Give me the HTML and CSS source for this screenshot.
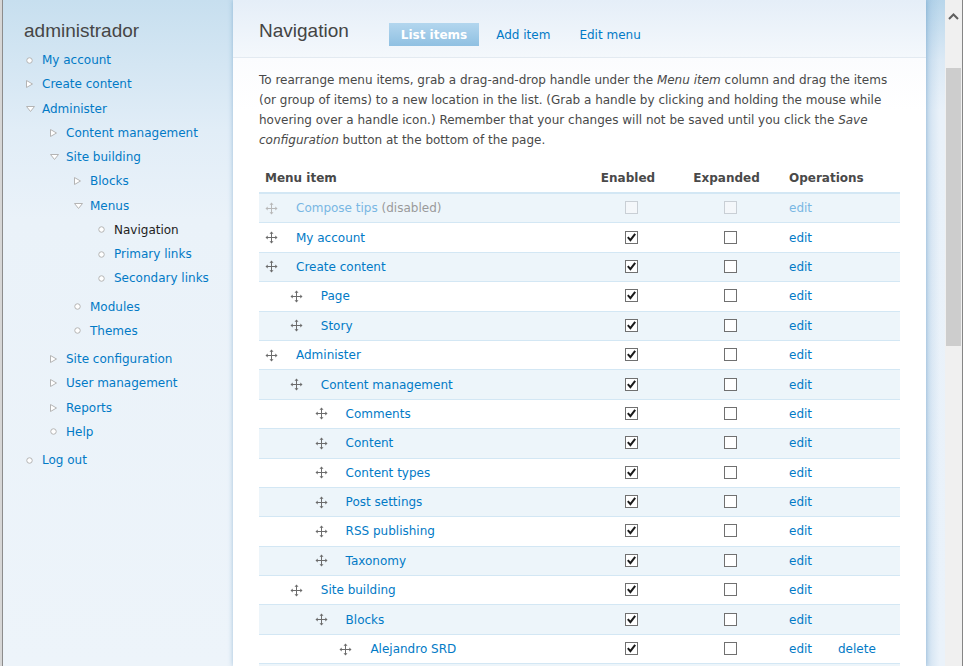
FILE: index.html
```html
<!DOCTYPE html>
<html>
<head>
<meta charset="utf-8">
<title>Navigation</title>
<link rel="stylesheet" href="styles.css">
</head>
<body>
<div class="edge"></div>
<aside class="sidebar">
  <h2 class="sb-title">administrador</h2>
  <ul class="menu">
    <li><div class="row"><span class="mk"><svg width="7" height="7" viewBox="0 0 7 7"><circle cx="3.5" cy="3.5" r="2.75" fill="#fff" stroke="#b4b4b4"/></svg></span><a href="#">My account</a></div></li>
    <li><div class="row"><span class="mk"><svg width="7" height="8" viewBox="0 0 7 8"><polygon points="0.5,0.5 6.5,4 0.5,7.5" fill="#fff" stroke="#b4b4b4"/></svg></span><a href="#">Create content</a></div></li>
    <li><div class="row"><span class="mk"><svg width="9" height="6" viewBox="0 0 9 6"><polygon points="0.5,0.5 8.5,0.5 4.5,5.5" fill="#fff" stroke="#b4b4b4"/></svg></span><a href="#">Administer</a></div>
      <ul>
        <li><div class="row"><span class="mk"><svg width="7" height="8" viewBox="0 0 7 8"><polygon points="0.5,0.5 6.5,4 0.5,7.5" fill="#fff" stroke="#b4b4b4"/></svg></span><a href="#">Content management</a></div></li>
        <li><div class="row"><span class="mk"><svg width="9" height="6" viewBox="0 0 9 6"><polygon points="0.5,0.5 8.5,0.5 4.5,5.5" fill="#fff" stroke="#b4b4b4"/></svg></span><a href="#">Site building</a></div>
          <ul>
            <li><div class="row"><span class="mk"><svg width="7" height="8" viewBox="0 0 7 8"><polygon points="0.5,0.5 6.5,4 0.5,7.5" fill="#fff" stroke="#b4b4b4"/></svg></span><a href="#">Blocks</a></div></li>
            <li><div class="row"><span class="mk"><svg width="9" height="6" viewBox="0 0 9 6"><polygon points="0.5,0.5 8.5,0.5 4.5,5.5" fill="#fff" stroke="#b4b4b4"/></svg></span><a href="#">Menus</a></div>
              <ul>
                <li><div class="row"><span class="mk"><svg width="7" height="7" viewBox="0 0 7 7"><circle cx="3.5" cy="3.5" r="2.75" fill="#fff" stroke="#b4b4b4"/></svg></span><a href="#" class="active">Navigation</a></div></li>
                <li><div class="row"><span class="mk"><svg width="7" height="7" viewBox="0 0 7 7"><circle cx="3.5" cy="3.5" r="2.75" fill="#fff" stroke="#b4b4b4"/></svg></span><a href="#">Primary links</a></div></li>
                <li><div class="row"><span class="mk"><svg width="7" height="7" viewBox="0 0 7 7"><circle cx="3.5" cy="3.5" r="2.75" fill="#fff" stroke="#b4b4b4"/></svg></span><a href="#">Secondary links</a></div></li>
              </ul>
            </li>
            <li><div class="row"><span class="mk"><svg width="7" height="7" viewBox="0 0 7 7"><circle cx="3.5" cy="3.5" r="2.75" fill="#fff" stroke="#b4b4b4"/></svg></span><a href="#">Modules</a></div></li>
            <li><div class="row"><span class="mk"><svg width="7" height="7" viewBox="0 0 7 7"><circle cx="3.5" cy="3.5" r="2.75" fill="#fff" stroke="#b4b4b4"/></svg></span><a href="#">Themes</a></div></li>
          </ul>
        </li>
        <li><div class="row"><span class="mk"><svg width="7" height="8" viewBox="0 0 7 8"><polygon points="0.5,0.5 6.5,4 0.5,7.5" fill="#fff" stroke="#b4b4b4"/></svg></span><a href="#">Site configuration</a></div></li>
        <li><div class="row"><span class="mk"><svg width="7" height="8" viewBox="0 0 7 8"><polygon points="0.5,0.5 6.5,4 0.5,7.5" fill="#fff" stroke="#b4b4b4"/></svg></span><a href="#">User management</a></div></li>
        <li><div class="row"><span class="mk"><svg width="7" height="8" viewBox="0 0 7 8"><polygon points="0.5,0.5 6.5,4 0.5,7.5" fill="#fff" stroke="#b4b4b4"/></svg></span><a href="#">Reports</a></div></li>
        <li><div class="row"><span class="mk"><svg width="7" height="7" viewBox="0 0 7 7"><circle cx="3.5" cy="3.5" r="2.75" fill="#fff" stroke="#b4b4b4"/></svg></span><a href="#">Help</a></div></li>
      </ul>
    </li>
    <li><div class="row"><span class="mk"><svg width="7" height="7" viewBox="0 0 7 7"><circle cx="3.5" cy="3.5" r="2.75" fill="#fff" stroke="#b4b4b4"/></svg></span><a href="#">Log out</a></div></li>
  </ul>
</aside>

<main class="panel">
  <header class="panel-head">
    <h1>Navigation</h1>
    <ul class="tabs">
      <li class="active"><a href="#">List items</a></li>
      <li><a href="#">Add item</a></li>
      <li><a href="#">Edit menu</a></li>
    </ul>
  </header>
  <div class="panel-body">
    <p>To rearrange menu items, grab a drag-and-drop handle under the <em>Menu item</em> column and drag the items (or group of items) to a new location in the list. (Grab a handle by clicking and holding the mouse while hovering over a handle icon.) Remember that your changes will not be saved until you click the <em>Save configuration</em> button at the bottom of the page.</p>
    <table class="items">
      <colgroup><col class="c1"><col class="c2"><col class="c3"><col class="c4"><col class="c5"></colgroup>
      <thead>
        <tr><th>Menu item</th><th class="ctr en">Enabled</th><th class="ctr ex">Expanded</th><th colspan="2">Operations</th></tr>
      </thead>
      <tbody>
        <tr class="odd disabled">
          <td><div class="mi"><svg class="handle" width="13" height="13" viewBox="0 0 13 13"><path d="M6.5 2v9M2 6.5h9" stroke="currentColor"/><path d="M6.5 0.5l-2 2.2h4zM6.5 12.5l-2-2.2h4zM0.5 6.5l2.2-2v4zM12.5 6.5l-2.2-2v4z" fill="currentColor"/></svg><a href="#">Compose tips</a>&nbsp;<span class="dis">(disabled)</span></div></td>
          <td class="ctr en"><span class="cb off"></span></td>
          <td class="ctr ex"><span class="cb off"></span></td>
          <td><a href="#">edit</a></td><td></td>
        </tr>
        <tr class="even">
          <td><div class="mi"><svg class="handle" width="13" height="13" viewBox="0 0 13 13"><path d="M6.5 2v9M2 6.5h9" stroke="currentColor"/><path d="M6.5 0.5l-2 2.2h4zM6.5 12.5l-2-2.2h4zM0.5 6.5l2.2-2v4zM12.5 6.5l-2.2-2v4z" fill="currentColor"/></svg><a href="#">My account</a></div></td>
          <td class="ctr en"><span class="cb"><svg width="11" height="11" viewBox="0 0 11 11"><path d="M1.8 5.2l2.6 3 4.8-6.4" stroke="#1a1a1a" stroke-width="2" fill="none"/></svg></span></td>
          <td class="ctr ex"><span class="cb"></span></td>
          <td><a href="#">edit</a></td><td></td>
        </tr>
        <tr class="odd">
          <td><div class="mi"><svg class="handle" width="13" height="13" viewBox="0 0 13 13"><path d="M6.5 2v9M2 6.5h9" stroke="currentColor"/><path d="M6.5 0.5l-2 2.2h4zM6.5 12.5l-2-2.2h4zM0.5 6.5l2.2-2v4zM12.5 6.5l-2.2-2v4z" fill="currentColor"/></svg><a href="#">Create content</a></div></td>
          <td class="ctr en"><span class="cb"><svg width="11" height="11" viewBox="0 0 11 11"><path d="M1.8 5.2l2.6 3 4.8-6.4" stroke="#1a1a1a" stroke-width="2" fill="none"/></svg></span></td>
          <td class="ctr ex"><span class="cb"></span></td>
          <td><a href="#">edit</a></td><td></td>
        </tr>
        <tr class="even">
          <td><div class="mi l1"><svg class="handle" width="13" height="13" viewBox="0 0 13 13"><path d="M6.5 2v9M2 6.5h9" stroke="currentColor"/><path d="M6.5 0.5l-2 2.2h4zM6.5 12.5l-2-2.2h4zM0.5 6.5l2.2-2v4zM12.5 6.5l-2.2-2v4z" fill="currentColor"/></svg><a href="#">Page</a></div></td>
          <td class="ctr en"><span class="cb"><svg width="11" height="11" viewBox="0 0 11 11"><path d="M1.8 5.2l2.6 3 4.8-6.4" stroke="#1a1a1a" stroke-width="2" fill="none"/></svg></span></td>
          <td class="ctr ex"><span class="cb"></span></td>
          <td><a href="#">edit</a></td><td></td>
        </tr>
        <tr class="odd">
          <td><div class="mi l1"><svg class="handle" width="13" height="13" viewBox="0 0 13 13"><path d="M6.5 2v9M2 6.5h9" stroke="currentColor"/><path d="M6.5 0.5l-2 2.2h4zM6.5 12.5l-2-2.2h4zM0.5 6.5l2.2-2v4zM12.5 6.5l-2.2-2v4z" fill="currentColor"/></svg><a href="#">Story</a></div></td>
          <td class="ctr en"><span class="cb"><svg width="11" height="11" viewBox="0 0 11 11"><path d="M1.8 5.2l2.6 3 4.8-6.4" stroke="#1a1a1a" stroke-width="2" fill="none"/></svg></span></td>
          <td class="ctr ex"><span class="cb"></span></td>
          <td><a href="#">edit</a></td><td></td>
        </tr>
        <tr class="even">
          <td><div class="mi"><svg class="handle" width="13" height="13" viewBox="0 0 13 13"><path d="M6.5 2v9M2 6.5h9" stroke="currentColor"/><path d="M6.5 0.5l-2 2.2h4zM6.5 12.5l-2-2.2h4zM0.5 6.5l2.2-2v4zM12.5 6.5l-2.2-2v4z" fill="currentColor"/></svg><a href="#">Administer</a></div></td>
          <td class="ctr en"><span class="cb"><svg width="11" height="11" viewBox="0 0 11 11"><path d="M1.8 5.2l2.6 3 4.8-6.4" stroke="#1a1a1a" stroke-width="2" fill="none"/></svg></span></td>
          <td class="ctr ex"><span class="cb"></span></td>
          <td><a href="#">edit</a></td><td></td>
        </tr>
        <tr class="odd">
          <td><div class="mi l1"><svg class="handle" width="13" height="13" viewBox="0 0 13 13"><path d="M6.5 2v9M2 6.5h9" stroke="currentColor"/><path d="M6.5 0.5l-2 2.2h4zM6.5 12.5l-2-2.2h4zM0.5 6.5l2.2-2v4zM12.5 6.5l-2.2-2v4z" fill="currentColor"/></svg><a href="#">Content management</a></div></td>
          <td class="ctr en"><span class="cb"><svg width="11" height="11" viewBox="0 0 11 11"><path d="M1.8 5.2l2.6 3 4.8-6.4" stroke="#1a1a1a" stroke-width="2" fill="none"/></svg></span></td>
          <td class="ctr ex"><span class="cb"></span></td>
          <td><a href="#">edit</a></td><td></td>
        </tr>
        <tr class="even">
          <td><div class="mi l2"><svg class="handle" width="13" height="13" viewBox="0 0 13 13"><path d="M6.5 2v9M2 6.5h9" stroke="currentColor"/><path d="M6.5 0.5l-2 2.2h4zM6.5 12.5l-2-2.2h4zM0.5 6.5l2.2-2v4zM12.5 6.5l-2.2-2v4z" fill="currentColor"/></svg><a href="#">Comments</a></div></td>
          <td class="ctr en"><span class="cb"><svg width="11" height="11" viewBox="0 0 11 11"><path d="M1.8 5.2l2.6 3 4.8-6.4" stroke="#1a1a1a" stroke-width="2" fill="none"/></svg></span></td>
          <td class="ctr ex"><span class="cb"></span></td>
          <td><a href="#">edit</a></td><td></td>
        </tr>
        <tr class="odd">
          <td><div class="mi l2"><svg class="handle" width="13" height="13" viewBox="0 0 13 13"><path d="M6.5 2v9M2 6.5h9" stroke="currentColor"/><path d="M6.5 0.5l-2 2.2h4zM6.5 12.5l-2-2.2h4zM0.5 6.5l2.2-2v4zM12.5 6.5l-2.2-2v4z" fill="currentColor"/></svg><a href="#">Content</a></div></td>
          <td class="ctr en"><span class="cb"><svg width="11" height="11" viewBox="0 0 11 11"><path d="M1.8 5.2l2.6 3 4.8-6.4" stroke="#1a1a1a" stroke-width="2" fill="none"/></svg></span></td>
          <td class="ctr ex"><span class="cb"></span></td>
          <td><a href="#">edit</a></td><td></td>
        </tr>
        <tr class="even">
          <td><div class="mi l2"><svg class="handle" width="13" height="13" viewBox="0 0 13 13"><path d="M6.5 2v9M2 6.5h9" stroke="currentColor"/><path d="M6.5 0.5l-2 2.2h4zM6.5 12.5l-2-2.2h4zM0.5 6.5l2.2-2v4zM12.5 6.5l-2.2-2v4z" fill="currentColor"/></svg><a href="#">Content types</a></div></td>
          <td class="ctr en"><span class="cb"><svg width="11" height="11" viewBox="0 0 11 11"><path d="M1.8 5.2l2.6 3 4.8-6.4" stroke="#1a1a1a" stroke-width="2" fill="none"/></svg></span></td>
          <td class="ctr ex"><span class="cb"></span></td>
          <td><a href="#">edit</a></td><td></td>
        </tr>
        <tr class="odd">
          <td><div class="mi l2"><svg class="handle" width="13" height="13" viewBox="0 0 13 13"><path d="M6.5 2v9M2 6.5h9" stroke="currentColor"/><path d="M6.5 0.5l-2 2.2h4zM6.5 12.5l-2-2.2h4zM0.5 6.5l2.2-2v4zM12.5 6.5l-2.2-2v4z" fill="currentColor"/></svg><a href="#">Post settings</a></div></td>
          <td class="ctr en"><span class="cb"><svg width="11" height="11" viewBox="0 0 11 11"><path d="M1.8 5.2l2.6 3 4.8-6.4" stroke="#1a1a1a" stroke-width="2" fill="none"/></svg></span></td>
          <td class="ctr ex"><span class="cb"></span></td>
          <td><a href="#">edit</a></td><td></td>
        </tr>
        <tr class="even">
          <td><div class="mi l2"><svg class="handle" width="13" height="13" viewBox="0 0 13 13"><path d="M6.5 2v9M2 6.5h9" stroke="currentColor"/><path d="M6.5 0.5l-2 2.2h4zM6.5 12.5l-2-2.2h4zM0.5 6.5l2.2-2v4zM12.5 6.5l-2.2-2v4z" fill="currentColor"/></svg><a href="#">RSS publishing</a></div></td>
          <td class="ctr en"><span class="cb"><svg width="11" height="11" viewBox="0 0 11 11"><path d="M1.8 5.2l2.6 3 4.8-6.4" stroke="#1a1a1a" stroke-width="2" fill="none"/></svg></span></td>
          <td class="ctr ex"><span class="cb"></span></td>
          <td><a href="#">edit</a></td><td></td>
        </tr>
        <tr class="odd">
          <td><div class="mi l2"><svg class="handle" width="13" height="13" viewBox="0 0 13 13"><path d="M6.5 2v9M2 6.5h9" stroke="currentColor"/><path d="M6.5 0.5l-2 2.2h4zM6.5 12.5l-2-2.2h4zM0.5 6.5l2.2-2v4zM12.5 6.5l-2.2-2v4z" fill="currentColor"/></svg><a href="#">Taxonomy</a></div></td>
          <td class="ctr en"><span class="cb"><svg width="11" height="11" viewBox="0 0 11 11"><path d="M1.8 5.2l2.6 3 4.8-6.4" stroke="#1a1a1a" stroke-width="2" fill="none"/></svg></span></td>
          <td class="ctr ex"><span class="cb"></span></td>
          <td><a href="#">edit</a></td><td></td>
        </tr>
        <tr class="even">
          <td><div class="mi l1"><svg class="handle" width="13" height="13" viewBox="0 0 13 13"><path d="M6.5 2v9M2 6.5h9" stroke="currentColor"/><path d="M6.5 0.5l-2 2.2h4zM6.5 12.5l-2-2.2h4zM0.5 6.5l2.2-2v4zM12.5 6.5l-2.2-2v4z" fill="currentColor"/></svg><a href="#">Site building</a></div></td>
          <td class="ctr en"><span class="cb"><svg width="11" height="11" viewBox="0 0 11 11"><path d="M1.8 5.2l2.6 3 4.8-6.4" stroke="#1a1a1a" stroke-width="2" fill="none"/></svg></span></td>
          <td class="ctr ex"><span class="cb"></span></td>
          <td><a href="#">edit</a></td><td></td>
        </tr>
        <tr class="odd">
          <td><div class="mi l2"><svg class="handle" width="13" height="13" viewBox="0 0 13 13"><path d="M6.5 2v9M2 6.5h9" stroke="currentColor"/><path d="M6.5 0.5l-2 2.2h4zM6.5 12.5l-2-2.2h4zM0.5 6.5l2.2-2v4zM12.5 6.5l-2.2-2v4z" fill="currentColor"/></svg><a href="#">Blocks</a></div></td>
          <td class="ctr en"><span class="cb"><svg width="11" height="11" viewBox="0 0 11 11"><path d="M1.8 5.2l2.6 3 4.8-6.4" stroke="#1a1a1a" stroke-width="2" fill="none"/></svg></span></td>
          <td class="ctr ex"><span class="cb"></span></td>
          <td><a href="#">edit</a></td><td></td>
        </tr>
        <tr class="even">
          <td><div class="mi l3"><svg class="handle" width="13" height="13" viewBox="0 0 13 13"><path d="M6.5 2v9M2 6.5h9" stroke="currentColor"/><path d="M6.5 0.5l-2 2.2h4zM6.5 12.5l-2-2.2h4zM0.5 6.5l2.2-2v4zM12.5 6.5l-2.2-2v4z" fill="currentColor"/></svg><a href="#">Alejandro SRD</a></div></td>
          <td class="ctr en"><span class="cb"><svg width="11" height="11" viewBox="0 0 11 11"><path d="M1.8 5.2l2.6 3 4.8-6.4" stroke="#1a1a1a" stroke-width="2" fill="none"/></svg></span></td>
          <td class="ctr ex"><span class="cb"></span></td>
          <td><a href="#">edit</a></td><td><a href="#">delete</a></td>
        </tr>
        <tr class="odd">
          <td><div class="mi l2"><svg class="handle" width="13" height="13" viewBox="0 0 13 13"><path d="M6.5 2v9M2 6.5h9" stroke="currentColor"/><path d="M6.5 0.5l-2 2.2h4zM6.5 12.5l-2-2.2h4zM0.5 6.5l2.2-2v4zM12.5 6.5l-2.2-2v4z" fill="currentColor"/></svg><a href="#">Menus</a></div></td>
          <td class="ctr en"><span class="cb"><svg width="11" height="11" viewBox="0 0 11 11"><path d="M1.8 5.2l2.6 3 4.8-6.4" stroke="#1a1a1a" stroke-width="2" fill="none"/></svg></span></td>
          <td class="ctr ex"><span class="cb"></span></td>
          <td><a href="#">edit</a></td><td></td>
        </tr>
      </tbody>
    </table>
  </div>
</main>

<div class="strip"></div>
<div class="scrollbar">
  <div class="sb-arrow"><svg width="11" height="7" viewBox="0 0 11 7"><path d="M1 6l4.5-4.5L10 6" stroke="#5f5f5f" stroke-width="2" fill="none"/></svg></div>
  <div class="sb-thumb"></div>
</div>
</body>
</html>
```

FILE: styles.css
```css
* { box-sizing: border-box; }

html, body {
  margin: 0;
  height: 666px;
  overflow: hidden;
}

body {
  display: flex;
  font: 12px/20px "DejaVu Sans", Verdana, sans-serif;
  color: #494949;
  background: linear-gradient(#c7dfef 0, #e1edf7 130px, #eaf2f9 220px, #edf4fa 100%);
}

a { color: #027ac6; text-decoration: none; }

.edge {
  width: 3px;
  flex: none;
  border-left: 2px solid #d6d6d6;
  border-right: 1px solid #8c8c8c;
}

/* Sidebar */
.sidebar {
  width: 230px;
  flex: none;
  padding: 20px 0 0 21px;
}

.sb-title {
  margin: 0 0 6px;
  font: normal 19px/22px "Liberation Sans", Arial, sans-serif;
  color: #464646;
}

.menu, .menu ul {
  list-style: none;
  margin: 0;
  padding: 0;
}

.menu ul {
  padding-left: 24px;
  margin-bottom: 4px;
}

.row {
  display: flex;
  align-items: center;
  height: 24.25px;
}

.mk {
  width: 18px;
  flex: none;
  display: flex;
  align-items: center;
  padding-left: 2px;
}

.mk svg { display: block; }

.menu a.active { color: #222; }

/* Main panel */
.panel {
  width: 693px;
  flex: none;
  position: relative;
  z-index: 1;
  background: linear-gradient(#fbfcfe 58px, #ffffff 110px);
  box-shadow: 0 0 5px rgba(70, 130, 185, 0.45);
}

.panel-head {
  height: 58px;
  padding: 20px 26px 0;
  display: flex;
  align-items: flex-start;
  border-bottom: 1px solid #e3eaf1;
  background: linear-gradient(#e5eef8, #f4f8fc);
}

.panel-head h1 {
  margin: 0;
  font: normal 19px/22px "Liberation Sans", Arial, sans-serif;
  color: #444;
}

.tabs {
  display: flex;
  list-style: none;
  margin: 3px 0 0 40px;
  padding: 0;
}

.tabs a {
  display: block;
  height: 23px;
  line-height: 24px;
  padding: 0 12px;
  margin-right: 5px;
}

.tabs .active a {
  color: #fff;
  font-weight: bold;
  background: linear-gradient(#b3d6ee, #8fc0e2);
}

.panel-body {
  padding: 12px 26px 0;
}

.panel-body p {
  margin: 0 0 15px;
  color: #494949;
}

/* Table */
.items {
  width: 641px;
  table-layout: fixed;
  border-collapse: separate;
  border-spacing: 0;
}

.c1 { width: 333px; }
.c2 { width: 78px; }
.c3 { width: 113px; }
.c4 { width: 49px; }
.c5 { width: 68px; }

.items th {
  height: 29px;
  padding: 0 6px 1px;
  text-align: left;
  font-weight: bold;
  color: #494949;
  border-bottom: 2px solid #d3e7f4;
  vertical-align: middle;
}

.items th.ctr, .items td.ctr { text-align: center; }

.items th.en { padding: 0 12px 1px 6px; }
.items td.ex { padding: 0 0 0 8px; }

.items td {
  height: 29.4px;
  padding: 0 6px;
  border-bottom: 1px solid #d3e7f4;
  vertical-align: middle;
}

.items tr.odd td { background: #edf5fa; }
.items tr.even td { background: #fff; }

.mi {
  display: flex;
  align-items: center;
  white-space: nowrap;
}

.mi.l1 { padding-left: 24.8px; }
.mi.l2 { padding-left: 49.6px; }
.mi.l3 { padding-left: 74.4px; }

.handle {
  flex: none;
  margin-right: 18px;
  color: #6c6c6c;
  display: block;
}

.cb {
  display: inline-block;
  vertical-align: middle;
  width: 13px;
  height: 13px;
  border: 1px solid #707070;
  background: #fff;
  position: relative;
  top: -1px;
}

.cb svg { display: block; margin: 0; }

.cb.off {
  border-color: #c9cfd5;
  background: #f4f7fa;
}

tr.disabled a { color: #79b7e3; }
tr.disabled .handle { color: #b8b8b8; }
tr.disabled .dis { color: #9a9a9a; }

/* Right side */
.strip {
  width: 19px;
  flex: none;
  background: linear-gradient(to right, rgba(120, 170, 210, 0.25), rgba(120, 170, 210, 0) 70%),
              linear-gradient(#b8d6eb, #dbe9f5 60px, #e9f1f9 110px, #eaf2fa);
}

.scrollbar {
  width: 18px;
  flex: none;
  background: #f0f0f0;
  border-right: 1px solid #858585;
  display: flex;
  flex-direction: column;
}

.sb-arrow {
  height: 68px;
  padding: 13px 0 0 3px;
}

.sb-arrow svg { display: block; }

.sb-thumb {
  width: 15px;
  margin-left: 1px;
  height: 278px;
  background: #cdcdcd;
}
```
